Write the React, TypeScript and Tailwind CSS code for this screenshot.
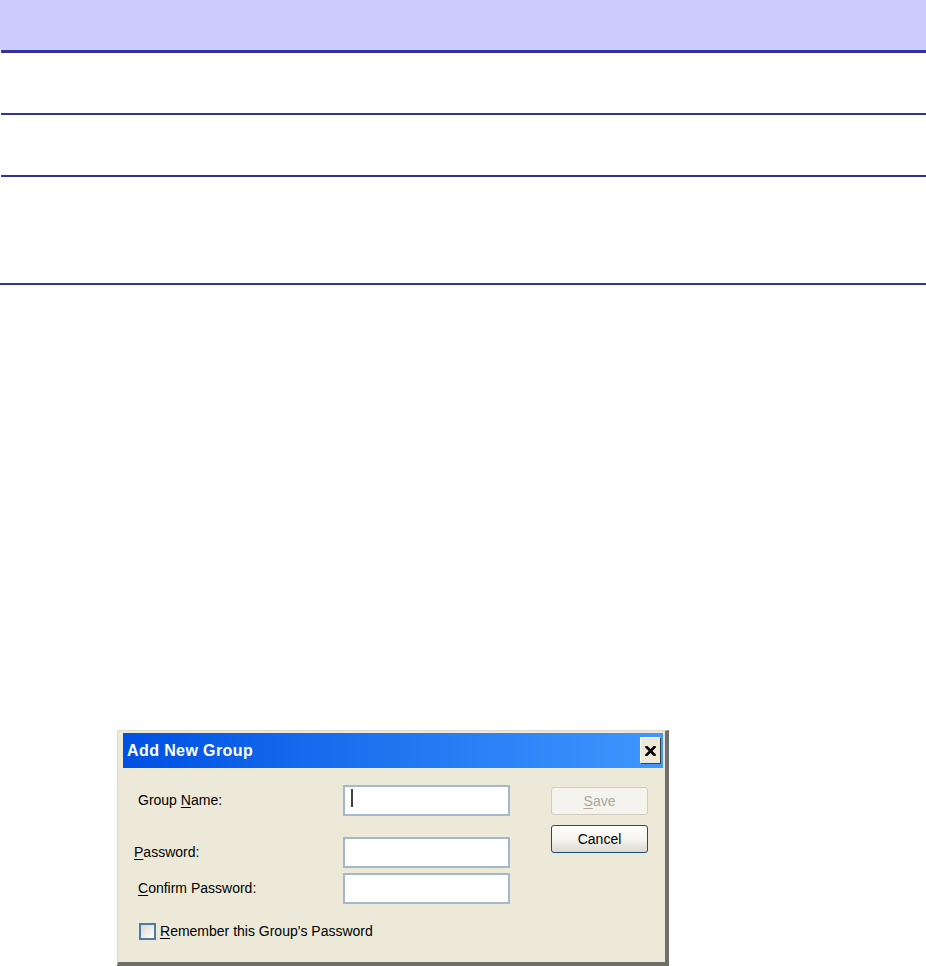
import React from 'react';

const font = { fontFamily: '"Liberation Sans", Arial, sans-serif' };

function Field({ label, caret, shift }: { label: React.ReactNode; caret?: boolean; shift?: boolean }) {
  return (
    <div className="flex items-center">
      <div className={shift ? '-ml-1 w-[209px] text-[14px] text-black' : 'w-[205px] text-[14px] text-black'}>{label}</div>
      <div className="flex h-[31px] w-[167px] items-start border-2 border-[#a3b8cc] bg-white pl-[6px] pt-[2px]">
        {caret && <span className="h-[18px] w-[2px] bg-[#404040]" />}
      </div>
    </div>
  );
}

export default function App() {
  return (
    <div className="min-h-[966px] w-full bg-white" style={font}>
      {/* header rules */}
      <div className="h-[50px] bg-[#ccccff]" />
      <div className="ml-px h-[3px] bg-[#333399]" />
      <div className="h-[60px]" />
      <div className="ml-px h-[2px] bg-[#333399]" />
      <div className="h-[60px]" />
      <div className="ml-px h-[2px] bg-[#333399]" />
      <div className="h-[106px]" />
      <div className="h-[2px] bg-[#333399]" />

      {/* dialog */}
      <div className="ml-[117px] mt-[445px] h-[236px] w-[552px] border-b-4 border-l border-r-4 border-t border-b-[#6f6e68] border-l-[#dcdad0] border-r-[#6f6e68] border-t-[#dcdad0] bg-[#ece9d8] pl-[5px] pr-[2px] pt-[2px]">
        <div className="flex h-[35px] items-center justify-between bg-linear-to-r from-[#0050e2] to-[#3f97ff] pl-[4px] pr-[2px]">
          <span className="text-[16px] font-bold tracking-[0.4px] text-white">Add New Group</span>
          <button className="flex h-[27px] w-[21px] items-center justify-center border border-b-[#404040] border-l-white border-r-[#404040] border-t-white bg-[#ece9d8]">
            <svg width="11" height="10" viewBox="0 0 11 10">
              <path d="M1.5 1 L9.5 9 M9.5 1 L1.5 9" stroke="#000" strokeWidth="2.6" strokeLinecap="square" />
            </svg>
          </button>
        </div>

        <div className="flex pt-[17px]">
          <div className="ml-[15px] flex flex-col">
            <Field
              caret
              label={
                <>
                  Group <span className="underline underline-offset-2">N</span>ame:
                </>
              }
            />
            <div className="mt-[21px]">
              <Field
                shift
                label={
                  <>
                    <span className="underline underline-offset-2">P</span>assword:
                  </>
                }
              />
            </div>
            <div className="mt-[5px]">
              <Field
                label={
                  <>
                    <span className="underline underline-offset-2">C</span>onfirm Password:
                  </>
                }
              />
            </div>
            <div className="mt-[17px] flex items-center">
              <span className="ml-px h-[17px] w-[17px] border-2 border-[#4f7aa5] bg-linear-to-br from-[#d8d7cf] to-white" />
              <span className="ml-[4px] text-[14px] text-black">
                <span className="underline underline-offset-2">R</span>emember this Group's Password
              </span>
            </div>
          </div>

          <div className="ml-[41px] mt-[2px] flex flex-col gap-[10px]">
            <button className="h-[28px] w-[97px] rounded-[3px] border border-[#cfcdc0] bg-[#f4f3ee] text-[14px] text-[#aca899]">
              <span className="underline underline-offset-2">S</span>ave
            </button>
            <button className="h-[28px] w-[97px] rounded-[3px] border border-[#1f4a7a] bg-linear-to-b from-white via-[#f5f4ef] to-[#dcdad0] text-[14px] text-black">
              Cancel
            </button>
          </div>
        </div>
      </div>
    </div>
  );
}
